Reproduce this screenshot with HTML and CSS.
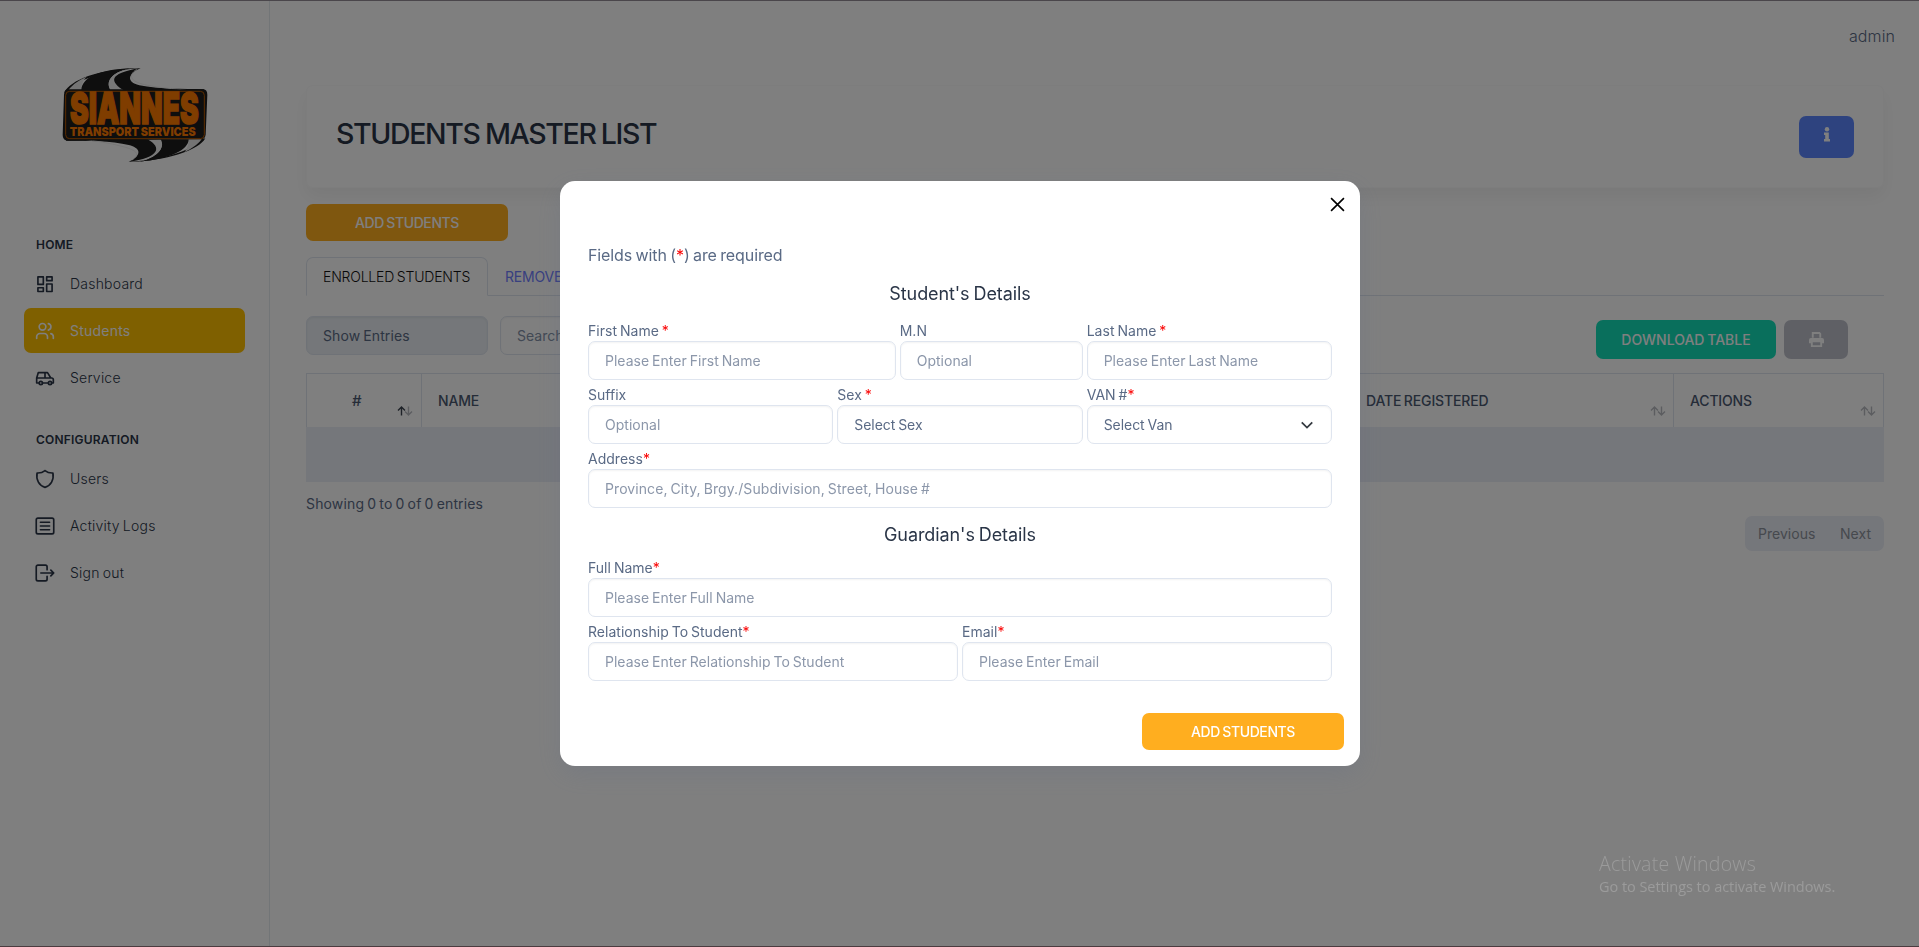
FILE: index.html
```html
<!DOCTYPE html>
<html lang="en">
<head>
<meta charset="utf-8">
<title>Students Master List</title>
<link rel="stylesheet" href="styles.css">
</head>
<body>
<div class="app">
  <aside class="sidebar">
    <svg class="logo" viewBox="188 202 438 286">
      <path d="M194 278C215 240 290 208 424 204C300 213 225 245 206 272Z" fill="#1c1c1c"/>
      <path d="M208 270C222 250 240 240 262 230C250 242 246 256 246 270Z" fill="#e8e8e8"/>
      <path d="M246 271C248 232 300 208 396 205C345 214 315 240 334 271Z" fill="#1c1c1c"/>
      <path d="M396 205C345 214 315 240 334 271H376C335 250 325 224 396 205Z" fill="#f0f0f0"/>
      <path d="M374 271C335 248 320 220 424 204C385 222 380 245 420 256C480 268 550 266 614 268V276Z" fill="#1c1c1c"/>
      <path d="M412 208C386 226 392 244 436 254C490 266 520 264 560 271" fill="none" stroke="#eee" stroke-width="3"/>
      <path d="M618 415C600 450 500 484 388 486C510 478 585 446 606 418Z" fill="#1c1c1c"/>
      <path d="M568 418H606C594 436 576 446 556 456C566 444 568 430 568 418Z" fill="#e8e8e8"/>
      <path d="M568 418C568 450 510 478 420 485C470 474 500 446 482 418Z" fill="#1c1c1c"/>
      <path d="M444 418H484C500 446 470 474 420 485C486 460 480 436 444 418Z" fill="#f0f0f0"/>
      <path d="M412 418H444C490 442 480 474 388 486C425 468 428 447 392 436C330 420 270 424 200 422V414Z" fill="#1c1c1c"/>
      <path d="M398 480C422 464 416 452 372 440S290 424 250 417" fill="none" stroke="#eee" stroke-width="3"/>
      <path d="M208 268H610Q624 268 624 284L619 404Q617 418 603 418L206 422Q190 422 190 405L194 284Q195 268 208 268Z" fill="#1c1c1c"/>
      <rect x="199" y="274" width="416" height="142" rx="12" fill="none" stroke="#b85a00" stroke-width="3"/>
      <text x="212" y="373" class="logo-name" textLength="386" lengthAdjust="spacingAndGlyphs">SIANNES</text>
      <text x="211" y="408" class="logo-sub" textLength="378" lengthAdjust="spacingAndGlyphs">TRANSPORT SERVICES</text>
    </svg>
    <nav class="nav">
      <h6 class="nav-head">HOME</h6>
      <a class="nav-item"><svg class="icon" viewBox="0 0 24 24"><path d="M3.500 3.500h6.500v9H3.500zM3.500 16.500h6.500v4.500H3.500zM14 12h6.500v9H14zM14 3.500h6.500V8H14z"/></svg><span>Dashboard</span></a>
      <a class="nav-item active"><svg class="icon" viewBox="0 0 24 24"><circle cx="9" cy="7" r="4"/><path d="M2 21v-2a4 4 0 0 1 4-4h5a4 4 0 0 1 4 4v2M16 3.100a4 4 0 0 1 0 7.800M22 21v-2a4 4 0 0 0-3-3.800"/></svg><span>Students</span></a>
      <a class="nav-item"><svg class="icon" viewBox="0 0 24 24"><circle cx="7" cy="18" r="2"/><circle cx="18" cy="18" r="2"/><path d="M5 18H2v-6l2-6.500h11l4 6.500h1a2 2 0 0 1 2 2v4h-2m-4 0H9M2 12h17M12 12V5.500"/></svg><span>Service</span></a>
      <h6 class="nav-head second">CONFIGURATION</h6>
      <a class="nav-item"><svg class="icon" viewBox="0 0 24 24"><path d="M12 2c2.500 2 6 3 9.500 2.800C23 13 19 20 12 22 5 20 1 13 2.500 4.800 6 5 9.500 4 12 2"/></svg><span>Users</span></a>
      <a class="nav-item"><svg class="icon" viewBox="0 0 24 24"><rect x="1.500" y="2.500" width="21" height="19" rx="2"/><path d="M6.500 7.500h11M6.500 12h11M6.500 16.500h11"/></svg><span>Activity Logs</span></a>
      <a class="nav-item"><svg class="icon" viewBox="0 0 24 24"><path d="M14.500 8V4.500a2 2 0 0 0-2-2h-9a2 2 0 0 0-2 2v15a2 2 0 0 0 2 2h9a2 2 0 0 0 2-2V16M7 12h15.500l-3.500-3.500m0 7 3.500-3.500"/></svg><span>Sign out</span></a>
    </nav>
  </aside>
  <main class="main">
    <header class="topbar">admin</header>
    <section class="title-card">
      <h1 class="title">STUDENTS MASTER LIST</h1>
      <button class="btn btn-info"><svg width="8" height="15" viewBox="0 0 8 15"><circle cx="4" cy="2.200" r="2.200"/><path d="M1 5.500h4.800V12H7v2.500H1V12h1.200V8H1z"/></svg></button>
    </section>
    <button class="btn btn-add">ADD STUDENTS</button>
    <div class="tabs"><span class="tab current">ENROLLED STUDENTS</span><span class="tab">REMOVED STUDENTS</span></div>
    <div class="tools">
      <div class="control entries">Show Entries</div>
      <div class="control search">Search</div>
      <button class="btn btn-download">DOWNLOAD TABLE</button>
      <button class="btn btn-print"><svg width="15" height="15" viewBox="0 0 16 16"><path d="M3 0h8.500L13 1.500V6h-2V2H5v4H3zM2 6.500h12a2 2 0 0 1 2 2V12h-2v4H2v-4H0V8.500a2 2 0 0 1 2-2zM4 11v3h8v-3z" fill-rule="evenodd"/></svg></button>
    </div>
    <div class="table">
      <div class="thead">
        <div class="th th-num"><span>#</span><svg class="sort" viewBox="0 0 16 10"><path class="on" d="M4.500 9.500V1M1 4.500 4.500 1 8 4.500"/><path d="M11.500.5V9M8 5.500 11.500 9 15 5.500"/></svg></div>
        <div class="th th-name"><span>NAME</span></div>
        <div class="th th-date"><span>DATE REGISTERED</span><svg class="sort" viewBox="0 0 16 10"><path d="M4.500 9.500V1M1 4.500 4.500 1 8 4.500M11.500.5V9M8 5.500 11.500 9 15 5.500"/></svg></div>
        <div class="th th-act"><span>ACTIONS</span><svg class="sort" viewBox="0 0 16 10"><path d="M4.500 9.500V1M1 4.500 4.500 1 8 4.500M11.500.5V9M8 5.500 11.500 9 15 5.500"/></svg></div>
      </div>
      <div class="empty-row"></div>
    </div>
    <p class="summary">Showing 0 to 0 of 0 entries</p>
    <div class="pager"><span>Previous</span><span>Next</span></div>
  </main>
</div>

<div class="backdrop">
  <div class="modal">
    <svg class="close" viewBox="0 0 14 14"><path d="M1 1l12 12M13 1 1 13"/></svg>
    <p class="note">Fields with (<b>*</b>) are required</p>
    <h5 class="group">Student's Details</h5>
    <div class="fields">
      <label class="field w5"><span>First Name <b>*</b></span><i class="control">Please Enter First Name</i></label>
      <label class="field w3"><span>M.N</span><i class="control">Optional</i></label>
      <label class="field w4"><span>Last Name <b>*</b></span><i class="control">Please Enter Last Name</i></label>
      <label class="field w4"><span>Suffix</span><i class="control">Optional</i></label>
      <label class="field w4"><span>Sex <b>*</b></span><i class="control select">Select Sex</i></label>
      <label class="field w4"><span>VAN #<b>*</b></span><i class="control select">Select Van<svg class="chevron" viewBox="0 0 16 16"><path d="m2 5 6 6 6-6"/></svg></i></label>
      <label class="field w12"><span>Address<b>*</b></span><i class="control address">Province, City, Brgy./Subdivision, Street, House #</i></label>
    </div>
    <h5 class="group guardian">Guardian's Details</h5>
    <div class="fields">
      <label class="field w12"><span>Full Name<b>*</b></span><i class="control">Please Enter Full Name</i></label>
      <label class="field w6"><span>Relationship To Student<b>*</b></span><i class="control">Please Enter Relationship To Student</i></label>
      <label class="field w6"><span>Email<b>*</b></span><i class="control">Please Enter Email</i></label>
    </div>
    <button class="btn btn-add submit">ADD STUDENTS</button>
  </div>
</div>
<div class="watermark"><div class="wm-title">Activate Windows</div><div class="wm-text">Go to Settings to activate Windows.</div></div>
</body>
</html>
```
FILE: styles.css
```css
* { box-sizing: border-box; }
body { margin: 0; height: 947px; overflow: hidden; background: #fff; color: #5a6a85; font: 400 14px/20px Inter, "Liberation Sans", sans-serif; letter-spacing: .02px; word-spacing: -1px; }
h1, h5, h6, p { margin: 0; }
.app { display: flex; height: 947px; border-top: 1px solid #948c96; border-bottom: 1px solid #96767f; }

.sidebar { width: 270px; flex: none; border-right: 1px solid #e5eaef; padding: 66px 24px 0; }
.logo { display: block; width: 146px; height: 96px; margin-left: 38px; overflow: visible; }
.logo-name { font: 900 130px Inter, sans-serif; fill: #ff7a00; stroke: #ff7a00; stroke-width: 5; letter-spacing: 0; }
.logo-sub { font: 900 36px Inter, sans-serif; fill: #ff7a00; letter-spacing: 0; }
.nav { padding-top: 72px; color: #2a3547; font-weight: 300; letter-spacing: .22px; }
.nav-head { margin: 0 0 6px; padding-left: 12px; font-size: 12px; line-height: 20px; font-weight: 600; letter-spacing: .2px; }
.nav-head.second { margin-top: 30px; }
.nav-item { display: flex; align-items: center; gap: 15px; height: 45px; margin-bottom: 2px; padding-left: 11px; border-radius: 7px; }
.nav-item.active { background: #ffc000; color: #fff; font-weight: 400; }
.icon { width: 20px; height: 20px; fill: none; stroke: currentColor; stroke-width: 2; stroke-linecap: round; stroke-linejoin: round; }

.main { flex: 1; padding: 0 35px 0 36px; }
.topbar { height: 84px; padding-top: 25px; margin-right: -11px; text-align: right; font-size: 16px; letter-spacing: .1px; font-weight: 300; }
.title-card { display: flex; align-items: center; justify-content: space-between; height: 103px; padding: 0 29px; border-radius: 7px; border: 1px solid #fafafb; box-shadow: 0 9px 17px rgba(0,0,0,.05); }
.title { color: #2a3547; font-size: 28.500px; line-height: 36px; font-weight: 500; letter-spacing: -1.35px; word-spacing: -1px; margin-top: -5px; }
.btn { display: flex; align-items: center; justify-content: center; border: 0; border-radius: 7px; color: #fff; font: 500 14px/20px Inter, sans-serif; letter-spacing: -.4px; word-spacing: -1px; padding: 0; }
.btn svg { fill: currentColor; }
.btn-info { width: 55px; height: 42px; background: #5d87ff; padding-bottom: 4px; }
.btn-add { width: 202px; height: 37px; background: #ffae1f; }
.main > .btn-add { margin-top: 16px; }

.tabs { display: flex; height: 39px; margin-top: 16px; border-bottom: 1px solid #dfe5ef; }
.tab { height: 39px; padding: 10px 17px; color: #7080ff; font-weight: 400; letter-spacing: -.2px; white-space: nowrap; }
.tab.current { width: 182px; border: 1px solid #dfe5ef; border-bottom-color: #fff; border-radius: 7px 7px 0 0; padding: 9px 16px; color: #111; font-weight: 300; }
.tools { display: flex; margin-top: 20px; }
.control { display: flex; align-items: center; height: 39px; padding: 0 16px; border: 1px solid #dfe5ef; border-radius: 7px; font-style: normal; box-shadow: inset 0 1px 2px rgba(0,0,0,.05); }
.entries { width: 182px; background: #eaeff4; letter-spacing: .1px; }
.search { width: 240px; margin-left: 12px; color: #8492a8; }
.btn-download { width: 180px; height: 39px; margin-top: 4px; margin-left: auto; background: #13deb9; letter-spacing: 0; }
.btn-print { width: 64px; height: 39px; margin: 4px 36px 0 8px; background: #bfc1cb; }

.table { margin-top: 14px; }
.thead { display: flex; height: 54px; border: 1px solid #dfe5ef; border-bottom: 0; color: #4a5871; font-weight: 500; letter-spacing: -.15px; }
.th { display: flex; justify-content: space-between; padding: 17px 7px 0 16px; border-right: 1px solid #dfe5ef; }
.th:last-child { border-right: 0; }
.th-num { width: 115px; padding-left: 45px; padding-right: 8px; font-size: 15px; }
.th-name { width: 928px; }
.th-date { flex: 1; }
.th-act { width: 209px; }
.sort { width: 16px; height: 10px; margin-top: 15px; fill: none; stroke: #b8bbc0; stroke-width: 1.4; }
.sort .on { stroke: #3c4450; }
.empty-row { height: 55px; background: #ebeef6; }
.summary { margin-top: 12px; letter-spacing: .15px; }
.pager { display: flex; justify-content: space-between; width: 139px; height: 35px; margin: 2px 0 0 auto; padding: 8px 13px 0 13px; border-radius: 7px; background: #ebeef6; color: #8c929c; }

.backdrop { position: fixed; inset: 0; background: rgba(0,0,0,.5); display: flex; justify-content: center; align-items: flex-start; padding-top: 181px; }
.modal { position: relative; left: .5px; width: 800px; height: 585px; padding: 64px 28px 0; border-radius: 15px; background: #fff; box-shadow: 0 8px 24px rgba(90,106,133,.2); }
.close { position: absolute; right: 15.500px; top: 15.500px; width: 15px; height: 15px; stroke: #000; stroke-width: 1.5; fill: none; }
.modal b { color: #fa0000; font-weight: 400; }
.note { font-size: 16px; letter-spacing: -.1px; }
.group { margin: 19px 0 17px; color: #2a3547; text-align: center; font-size: 18px; line-height: 20px; font-weight: 400; letter-spacing: -.09px; }
.group.guardian { margin: 17px 0 13px; }
.fields { display: grid; grid-template-columns: repeat(12, 1fr); column-gap: 4px; row-gap: 5px; }
.field > span { display: block; height: 20px; }
.field .control { color: #8c97aa; }
.field .select { color: #5a6a85; letter-spacing: -.05px; }
.field .address { letter-spacing: .08px; }
.select { justify-content: space-between; }
.w3 { grid-column: span 3; }
.w4 { grid-column: span 4; }
.w5 { grid-column: span 5; }
.w6 { grid-column: span 6; }
.w12 { grid-column: span 12; }
.chevron { width: 14px; height: 14px; fill: none; stroke: #343a40; stroke-width: 2; margin-right: 1px; }
.submit { margin: 32px -12px 0 auto; }

.watermark { position: fixed; left: 1599px; top: 851px; color: #9b9b9b; font-family: "Open Sans", "Noto Sans", sans-serif; letter-spacing: 0; word-spacing: 0; }
.wm-title { font-size: 19.500px; line-height: 26px; font-weight: 300; letter-spacing: .25px; }
.wm-text { font-size: 14.500px; line-height: 20px; letter-spacing: -.04px; }
```
